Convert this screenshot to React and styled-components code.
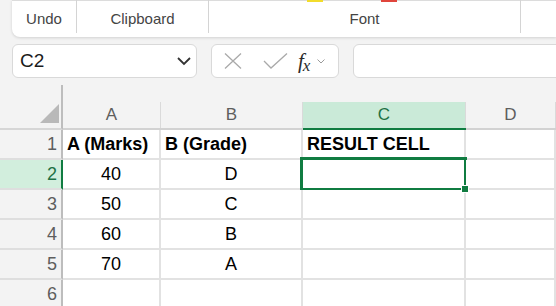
import styled, { createGlobalStyle, css } from "styled-components";

const Global = createGlobalStyle`
  body {
    margin: 0;
    background: #f3f3f3;
    font-family: "Liberation Sans", Arial, sans-serif;
    overflow: hidden;
  }
`;

const Page = styled.div`
  width: 556px;
  height: 306px;
  overflow: hidden;
`;

const Ribbon = styled.div`
  margin-left: 12px;
  height: 37px;
  background: #fff;
  border-bottom-left-radius: 8px;
  box-shadow: 0 1px 3px rgba(0, 0, 0, 0.14);
  display: flex;
  position: relative;
  border-top: 1px solid #dcdcdc;
  box-sizing: border-box;
`;

const Group = styled.div`
  width: ${(p) => (p.$w ? `${p.$w}px` : "auto")};
  flex: ${(p) => (p.$w ? "none" : 1)};
  display: flex;
  align-items: center;
  justify-content: center;
  font-size: 15px;
  color: #444;
  padding-top: 4px;
  box-sizing: border-box;
  border-right: ${(p) => (p.$last ? "none" : "1px solid #d4d4d4")};
  height: 33px;
  margin-top: -1px;
  position: relative;
`;

const ColorMark = styled.span`
  position: absolute;
  top: 0;
  left: ${(p) => p.$x}px;
  width: 16px;
  height: 2px;
  background: ${(p) => p.$c};
`;

const FormulaRow = styled.div`
  display: flex;
  gap: 14px;
  margin: 7px -10px 0 12px;
  height: 34px;
`;

const Box = styled.div`
  background: #fff;
  border: 1px solid #d9d9d9;
  border-radius: 6px;
  box-sizing: border-box;
  display: flex;
  align-items: center;
`;

const NameBox = styled(Box)`
  width: 185px;
  justify-content: space-between;
  padding: 0 4px 0 7px;
  font-size: 19px;
  color: #1b1b1b;
`;

const FxBox = styled(Box)`
  width: 128px;
  padding-left: 12px;
`;

const FormulaBar = styled(Box)`
  flex: 1;
`;

const IconSlot = styled.span`
  display: flex;
  align-items: center;
  justify-content: center;
  width: ${(p) => p.$w}px;
  margin-left: ${(p) => p.$ml || 0}px;
`;

const Fx = styled.span`
  font-family: "Liberation Serif", "DejaVu Serif", serif;
  font-style: italic;
  color: #2b2b2b;
  font-size: 21px;
  display: flex;
  align-items: baseline;
  margin-left: 10px;
  sub {
    font-size: 17px;
    vertical-align: baseline;
    margin-left: -1px;
    position: relative;
    top: 3px;
  }
`;

const Sheet = styled.div`
  margin-top: 7px;
  display: grid;
  grid-template-columns: 63px 98px 142px 163px 1fr;
  grid-template-rows: 45px repeat(6, 30px);
`;

const Corner = styled.div`
  border-right: 2px solid #bdbdbd;
  border-bottom: 2px solid #d6d6d6;
  display: flex;
  align-items: flex-end;
  justify-content: flex-end;
  padding: 0 2px 5px 0;
`;

const Triangle = styled.div`
  width: 0;
  height: 0;
  border-left: 19px solid transparent;
  border-bottom: 19px solid #b9b9b9;
`;

const ColHead = styled.div`
  border-bottom: 2px solid ${(p) => (p.$sel ? "#107c41" : "#d2d2d2")};
  padding-top: 17px;
  display: flex;
`;

const ColLabel = styled.div`
  flex: 1;
  display: flex;
  align-items: center;
  justify-content: center;
  font-size: 17px;
  color: ${(p) => (p.$sel ? "#1e7145" : "#5e5e5e")};
  background: ${(p) => (p.$sel ? "#caead8" : "transparent")};
  border-right: 1px solid #dadada;
`;

const RowHead = styled.div`
  border-right: 2px solid ${(p) => (p.$sel ? "#107c41" : "#bdbdbd")};
  border-bottom: 2px solid #dedede;
  background: ${(p) => (p.$sel ? "#d2eedd" : "transparent")};
  color: ${(p) => (p.$sel ? "#1e7145" : "#5e5e5e")};
  font-size: 18px;
  display: flex;
  align-items: center;
  justify-content: flex-end;
  padding-right: 4px;
`;

const Cell = styled.div`
  background: #fff;
  border-right: 2px solid #e2e2e2;
  border-bottom: 2px solid #e2e2e2;
  display: flex;
  align-items: center;
  font-size: 18px;
  color: #000;
  padding: 1px 4px 0;
  justify-content: ${(p) => (p.$center ? "center" : "flex-start")};
  font-weight: ${(p) => (p.$bold ? 700 : 400)};
  position: relative;
  ${(p) =>
    p.$active &&
    css`
      &::after {
        content: "";
        position: absolute;
        left: -3px;
        top: -3px;
        right: -3px;
        bottom: -3px;
        border: 3px solid #107c41;
      }
      &::before {
        content: "";
        position: absolute;
        right: -5px;
        bottom: -5px;
        width: 6px;
        height: 6px;
        background: #107c41;
        border: 1px solid #fff;
        z-index: 1;
      }
    `}
`;

const rows = [
  ["A (Marks)", "B (Grade)", "RESULT CELL"],
  ["40", "D", ""],
  ["50", "C", ""],
  ["60", "B", ""],
  ["70", "A", ""],
  ["", "", ""],
];

export default function App() {
  return (
    <Page>
      <Global />
      <Ribbon>
        <Group $w={65}>Undo</Group>
        <Group $w={132}>Clipboard</Group>
        <Group $w={312}>
          <ColorMark $x={98} $c="#f2dc2c" />
          <ColorMark $x={172} $c="#e0453c" />
          Font
        </Group>
        <Group $last />
      </Ribbon>

      <FormulaRow>
        <NameBox>
          C2
          <svg width="16" height="10" viewBox="0 0 16 10">
            <path d="M2 2 L8 8 L14 2" fill="none" stroke="#333" strokeWidth="1.8" />
          </svg>
        </NameBox>
        <FxBox>
          <IconSlot $w={18}>
            <svg width="18" height="16" viewBox="0 0 18 16">
              <path d="M1 0.5 L17 15.5 M17 0.5 L1 15.5" stroke="#a9a9a9" strokeWidth="1.3" />
            </svg>
          </IconSlot>
          <IconSlot $w={26} $ml={20}>
            <svg width="25" height="16" viewBox="0 0 25 16">
              <path d="M1 8 L8 15 L24 0.5" fill="none" stroke="#a9a9a9" strokeWidth="1.3" />
            </svg>
          </IconSlot>
          <Fx>
            f<sub>x</sub>
          </Fx>
          <IconSlot $w={10} $ml={6}>
            <svg width="8" height="5" viewBox="0 0 8 5">
              <path d="M0.5 0.5 L4 4 L7.5 0.5" fill="none" stroke="#9a9a9a" strokeWidth="1" />
            </svg>
          </IconSlot>
        </FxBox>
        <FormulaBar />
      </FormulaRow>

      <Sheet>
        <Corner>
          <Triangle />
        </Corner>
        {["A", "B", "C", "D"].map((c) => (
          <ColHead key={c} $sel={c === "C"}>
            <ColLabel $sel={c === "C"}>{c}</ColLabel>
          </ColHead>
        ))}
        {rows.map((r, i) => (
          <Row key={i} n={i + 1} cells={r} />
        ))}
      </Sheet>
    </Page>
  );
}

function Row({ n, cells }) {
  const header = n === 1;
  return (
    <>
      <RowHead $sel={n === 2}>{n}</RowHead>
      <Cell $bold={header} $center={!header}>{cells[0]}</Cell>
      <Cell $bold={header} $center={!header}>{cells[1]}</Cell>
      <Cell $bold={header} $active={n === 2}>{cells[2]}</Cell>
      <Cell />
    </>
  );
}
